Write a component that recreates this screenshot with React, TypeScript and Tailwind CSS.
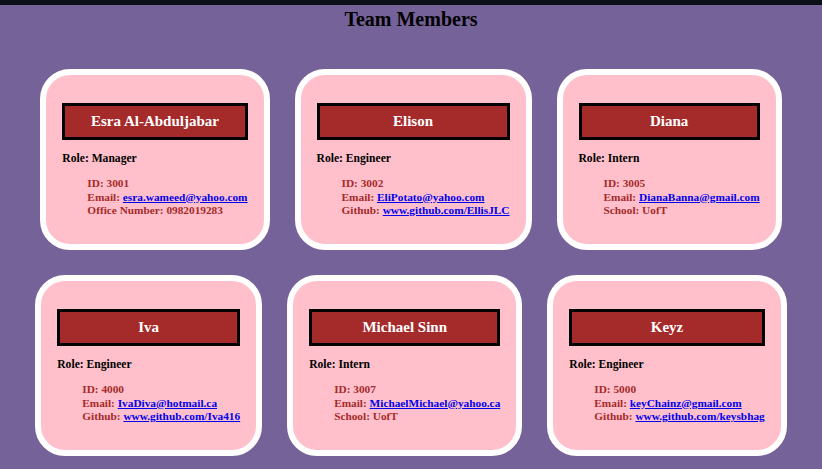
type Member = {
  name: string;
  role: string;
  id: string;
  email: string;
  extraLabel: string;
  extraValue: string;
  extraLink?: boolean;
};

const members: Member[] = [
  { name: "Esra Al-Abduljabar", role: "Manager", id: "3001", email: "esra.wameed@yahoo.com", extraLabel: "Office Number", extraValue: "0982019283" },
  { name: "Elison", role: "Engineer", id: "3002", email: "EliPotato@yahoo.com", extraLabel: "Github", extraValue: "www.github.com/EllisJLC", extraLink: true },
  { name: "Diana", role: "Intern", id: "3005", email: "DianaBanna@gmail.com", extraLabel: "School", extraValue: "UofT" },
  { name: "Iva", role: "Engineer", id: "4000", email: "IvaDiva@hotmail.ca", extraLabel: "Github", extraValue: "www.github.com/Iva416", extraLink: true },
  { name: "Michael Sinn", role: "Intern", id: "3007", email: "MichaelMichael@yahoo.ca", extraLabel: "School", extraValue: "UofT" },
  { name: "Keyz", role: "Engineer", id: "5000", email: "keyChainz@gmail.com", extraLabel: "Github", extraValue: "www.github.com/keysbhag", extraLink: true },
];

function Card({ m }: { m: Member }) {
  return (
    <div className="w-fit rounded-[30px] border-[6px] border-white bg-[#ffc0cb] px-4 pt-[28px] pb-[27px]">
      <div className="flex flex-col">
        {/* name banner */}
        <div className="h-[37px] w-full border-[3px] border-black bg-[#a52a2a] text-center text-[15px] leading-[31px] font-bold text-white">
          {m.name}
        </div>
        <p className="mt-[12px] text-[11.6px] leading-[13.3px] font-bold text-black">Role: {m.role}</p>
        <ul className="mt-[12px] pl-[25px] text-[11.3px] leading-[13.3px] font-bold whitespace-nowrap text-[#a52a2a]">
          <li>ID: {m.id}</li>
          <li>
            Email: <a href="#" className="text-[#0000ee] underline">{m.email}</a>
          </li>
          <li>
            {m.extraLabel}:{" "}
            {m.extraLink ? (
              <a href="#" className="text-[#0000ee] underline">{m.extraValue}</a>
            ) : (
              m.extraValue
            )}
          </li>
        </ul>
      </div>
    </div>
  );
}

export default function App() {
  return (
    <div className="min-h-[469px] bg-[#756299]" style={{ fontFamily: '"Liberation Serif", "Times New Roman", serif' }}>
      <div className="h-[5px] bg-[#0b0f17]"></div>
      <h1 className="mt-[2px] text-center text-[20px] leading-[24px] font-bold text-black">Team Members</h1>
      <div className="mt-[38px] flex flex-wrap justify-center gap-[25px] pb-[13px]">
        {members.map((m) => (
          <Card key={m.name} m={m} />
        ))}
      </div>
    </div>
  );
}
